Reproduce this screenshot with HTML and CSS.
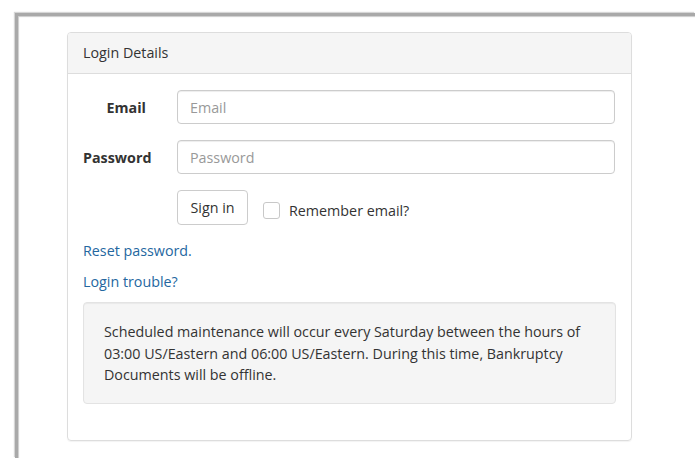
FILE: index.html
```html
<!DOCTYPE html>
<html lang="en">
<head>
    <meta charset="UTF-8">
    <meta name="viewport" content="width=device-width, initial-scale=1.0">
    <title>Login</title>
    <link rel="stylesheet" href="styles.css">
</head>
<body>
    <div class="frame">
        <div class="panel">
            <div class="panel-heading">Login Details</div>
            <div class="panel-body">
                <form class="login-form">
                    <label for="email" class="form-label short">Email</label>
                    <input type="text" id="email" placeholder="Email">
                    <label for="password" class="form-label">Password</label>
                    <input type="password" id="password" placeholder="Password">
                    <div></div>
                    <div class="actions">
                        <button type="button">Sign in</button>
                        <label class="remember"><span class="checkbox"></span>Remember email?</label>
                    </div>
                </form>

                <p class="link-line"><a href="#">Reset password.</a></p>
                <p class="link-line"><a href="#">Login trouble?</a></p>

                <div class="well">
                    Scheduled maintenance will occur every Saturday between the hours of
                    03:00 US/Eastern and 06:00 US/Eastern. During this time, Bankruptcy
                    Documents will be offline.
                </div>
            </div>
        </div>
    </div>
</body>
</html>
```

FILE: styles.css
```css
body {
    font-family: "Open Sans", Arial, sans-serif;
    font-size: 14.3px;
    color: #333;
    background-color: #fff;
    margin: 0;
    padding: 0;
}
.frame {
    margin: 13px 0 0 15px;
    width: 680px;
    height: 445px;
    border-top: 3px solid #a9a9a9;
    border-left: 3px solid #a9a9a9;
    box-shadow: inset 1px 1px 1px #ccc, -1px -1px 1px #d6d6d6;
    padding: 16px 0 0 49px;
    box-sizing: border-box;
}
.panel {
    width: 565px;
    height: 409px;
    box-sizing: border-box;
    border: 1px solid #ddd;
    border-radius: 4px;
    box-shadow: 0 1px 1px rgba(0, 0, 0, 0.05);
}
.panel-heading {
    background-color: #f5f5f5;
    border-bottom: 1px solid #ddd;
    border-radius: 3px 3px 0 0;
    padding: 10px 15px;
    line-height: 20px;
}
.panel-body {
    padding: 16px 15px 15px;
}
.login-form {
    display: grid;
    grid-template-columns: 68px 1fr;
    column-gap: 26px;
    row-gap: 16px;
    align-items: center;
}
.form-label {
    font-weight: bold;
    text-align: right;
}
.form-label.short {
    padding-right: 5px;
}
input[type="text"], input[type="password"] {
    height: 34px;
    margin-right: 1px;
    padding: 6px 12px;
    box-sizing: border-box;
    border: 1px solid #ccc;
    border-radius: 4px;
    font-family: inherit;
    font-size: 14.3px;
    color: #555;
    box-shadow: inset 0 1px 1px rgba(0, 0, 0, 0.075);
}
input::placeholder {
    color: #999;
}
.actions {
    display: flex;
    align-items: center;
}
button {
    width: 71px;
    height: 35px;
    padding: 0;
    background-color: #fff;
    border: 1px solid #ccc;
    border-radius: 4px;
    font-family: inherit;
    font-size: 14.3px;
    color: #333;
    cursor: pointer;
}
.remember {
    display: flex;
    align-items: center;
    margin-left: 15px;
    margin-top: 5px;
}
.checkbox {
    width: 15px;
    height: 15px;
    border: 1px solid #c8c8c8;
    border-radius: 3px;
    margin-right: 9px;
    background-color: #fff;
}
.link-line {
    margin: 0;
    line-height: 20px;
}
.link-line:first-of-type {
    margin-top: 16px;
}
.link-line + .link-line {
    margin-top: 11px;
}
a {
    color: #24679f;
    text-decoration: none;
}
.well {
    margin-top: 10px;
    padding: 18px 20px 17px;
    background-color: #f5f5f5;
    border: 1px solid #e3e3e3;
    border-radius: 4px;
    line-height: 21.5px;
    box-shadow: inset 0 1px 1px rgba(0, 0, 0, 0.05);
}
```
